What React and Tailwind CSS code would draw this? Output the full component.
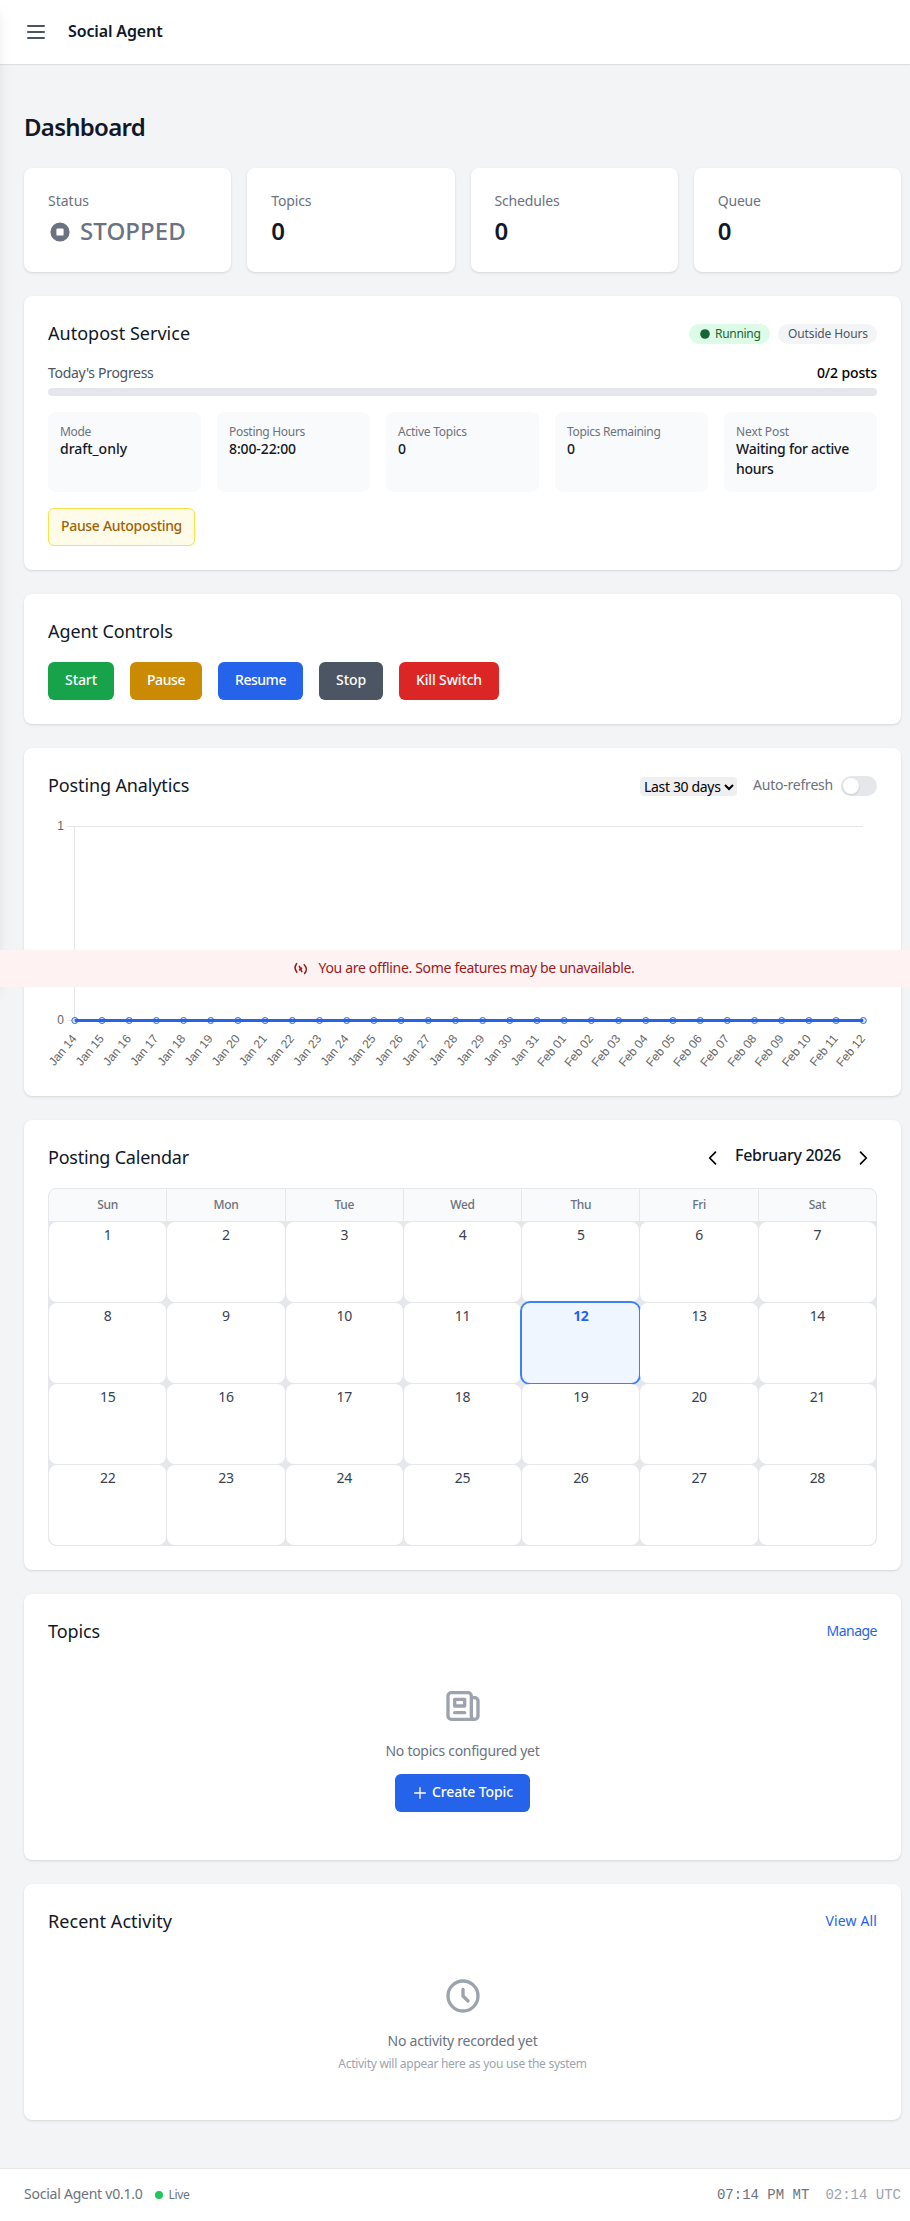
const STATS = [
  { label: "Topics", value: "0", tracking: "tracking-[-0.01em]" },
  { label: "Schedules", value: "0", tracking: "tracking-[-0.0113em]" },
  { label: "Queue", value: "0", tracking: "tracking-[-0.0147em]" },
];

const DETAILS = [
  { label: "Mode", value: "draft_only", lt: "tracking-[-0.0269em]", vt: "tracking-[-0.0019em]" },
  { label: "Posting Hours", value: "8:00-22:00", lt: "tracking-[-0.0249em]", vt: "tracking-[-0.0083em]" },
  { label: "Active Topics", value: "0", lt: "tracking-[-0.0200em]", vt: "tracking-normal" },
  { label: "Topics Remaining", value: "0", lt: "tracking-[-0.0275em]", vt: "tracking-normal" },
  { label: "Next Post", value: "Waiting for active hours", lt: "tracking-[-0.0097em]", vt: "tracking-[-0.018em]" },
];

const CONTROLS = [
  { label: "Start", width: "w-[66px]", color: "bg-[#16a34a]", tracking: "tracking-[-0.0051em]" },
  { label: "Pause", width: "w-[72px]", color: "bg-[#ca8a04]", tracking: "tracking-[-0.0309em]" },
  { label: "Resume", width: "w-[85px]", color: "bg-[#2563eb]", tracking: "tracking-[-0.0329em]" },
  { label: "Stop", width: "w-16", color: "bg-[#4b5563]", tracking: "tracking-[-0.0053em]" },
  { label: "Kill Switch", width: "w-[100px]", color: "bg-[#dc2626]", tracking: "tracking-[-0.0105em]" },
];

const WEEKDAYS = ["Sun", "Mon", "Tue", "Wed", "Thu", "Fri", "Sat"];
const TODAY = 12;

const CHART_LABELS = [
  ...Array.from({ length: 18 }, (_, i) => `Jan ${14 + i}`),
  ...Array.from({ length: 12 }, (_, i) => `Feb ${String(i + 1).padStart(2, "0")}`),
];

function Card({ children, className = "" }) {
  return (
    <section
      className={`rounded-lg bg-white p-6 shadow-[0_1px_3px_0_rgb(0_0_0/0.1),0_1px_2px_-1px_rgb(0_0_0/0.1)] ${className}`}
    >
      {children}
    </section>
  );
}

function CardTitle({ children, className }) {
  return (
    <h2 className={`pb-0.5 text-lg leading-[26px] font-normal whitespace-nowrap text-[#111827] ${className}`}>
      {children}
    </h2>
  );
}

function Header() {
  return (
    <header className="flex h-16 items-center gap-5 bg-white px-6 shadow-[0_1px_2px_0_rgb(0_0_0/0.05),0_1px_0_0_#e5e7eb]">
      <button aria-label="Open menu" className="text-[#4b5563]">
        <svg className="size-6" fill="none" viewBox="0 0 24 24" stroke="currentColor" strokeWidth="2" strokeLinecap="round">
          <path d="M4 6h16M4 12h16M4 18h16" />
        </svg>
      </button>
      <span className="pb-0.5 text-base leading-[22px] font-semibold tracking-[-0.0084em] text-[#111827]">
        Social Agent
      </span>
    </header>
  );
}

function StatusCards() {
  return (
    <div className="grid grid-cols-4 gap-4">
      <Card>
        <p className="pb-0.5 text-sm leading-[18px] text-[#6b7280]">Status</p>
        <p className="mt-1 flex items-center gap-2 text-2xl leading-8 font-medium text-[#6b7280]">
          <svg className="size-6" fill="currentColor" viewBox="0 0 20 20">
            <path
              fillRule="evenodd"
              d="M10 18a8 8 0 100-16 8 8 0 000 16zM8 7a1 1 0 00-1 1v4a1 1 0 001 1h4a1 1 0 001-1V8a1 1 0 00-1-1H8z"
            />
          </svg>
          <span className="pb-0.5 leading-[30px] tracking-[0.0047em]">STOPPED</span>
        </p>
      </Card>
      {STATS.map((s) => (
        <Card key={s.label}>
          <p className={`pb-0.5 text-sm leading-[18px] text-[#6b7280] ${s.tracking}`}>{s.label}</p>
          <p className="mt-1 pb-0.5 text-2xl leading-[30px] font-semibold text-[#111827]">{s.value}</p>
        </Card>
      ))}
    </div>
  );
}

function AutopostCard() {
  return (
    <Card>
      <div className="flex items-center justify-between">
        <CardTitle className="tracking-[0.001em]">Autopost Service</CardTitle>
        <div className="flex gap-2 text-xs leading-4">
          <span className="flex h-5 w-[81px] items-center gap-1 rounded-full bg-[#dcfce7] px-2.5 tracking-[-0.024em] text-[#166534]">
            <svg className="size-3 shrink-0" fill="currentColor" viewBox="0 0 20 20">
              <circle cx="10" cy="10" r="8" />
            </svg>
            Running
          </span>
          <span className="flex h-5 w-[99px] items-center rounded-full bg-[#f3f4f6] px-2.5 tracking-[-0.010em] whitespace-nowrap text-[#4b5563]">
            Outside Hours
          </span>
        </div>
      </div>
      <div className="mt-4 flex justify-between pb-0.5 text-sm leading-[18px]">
        <span className="tracking-[-0.0218em] text-[#4b5563]">Today's Progress</span>
        <span className="font-medium tracking-[-0.0099em] text-black">0/2 posts</span>
      </div>
      <div className="mt-1 h-2 rounded bg-[#e5e7eb]" />
      <div className="mt-4 grid grid-cols-5 gap-4">
        {DETAILS.map((d) => (
          <div key={d.label} className="rounded-lg bg-[#f9fafb] p-3">
            <p className={`text-xs leading-4 whitespace-nowrap text-[#6b7280] ${d.lt}`}>{d.label}</p>
            <p className={`-mt-px mb-px text-sm leading-5 font-medium text-[#111827] ${d.vt}`}>{d.value}</p>
          </div>
        ))}
      </div>
      <button className="mt-4 flex h-[38px] w-[147px] items-center justify-center rounded-md border border-[#fde047] bg-[#fefce8] pb-0.5 text-sm leading-5 font-medium tracking-[-0.0223em] whitespace-nowrap text-[#a16207]">
        Pause Autoposting
      </button>
    </Card>
  );
}

function ControlsCard() {
  return (
    <Card>
      <CardTitle className="tracking-[-0.005em]">Agent Controls</CardTitle>
      <div className="mt-4 flex gap-4">
        {CONTROLS.map((c) => (
          <button
            key={c.label}
            className={`h-[38px] rounded-md pb-0.5 text-sm leading-5 font-medium text-white ${c.width} ${c.color} ${c.tracking}`}
          >
            {c.label}
          </button>
        ))}
      </div>
    </Card>
  );
}

function PostsChart() {
  const first = 26.8;
  const step = (815.3 - first) / (CHART_LABELS.length - 1);
  const baseline = 204.5;
  return (
    <svg
      className="mt-4 block h-64 w-full overflow-visible font-['Liberation_Sans',sans-serif] text-xs"
      viewBox="0 0 829 256"
    >
      <g stroke="#e5e5e5" fill="none">
        <path d="M19 10.5H815M19 204.5H815M26.5 10V204" />
      </g>
      <g fill="#666666" textAnchor="end">
        <text x="16" y="14">1</text>
        <text x="16" y="208">0</text>
      </g>
      <path d={`M${first} ${baseline}H815.3`} stroke="#2563eb" strokeWidth="3" />
      {CHART_LABELS.map((label, i) => {
        const x = first + i * step;
        return (
          <g key={label}>
            <circle cx={x} cy={baseline} r="3" fill="#2563eb" fillOpacity="0.1" stroke="#2563eb" />
            <text transform={`translate(${x + 2.5} 223) rotate(-50)`} textAnchor="end" fill="#666666">
              {label}
            </text>
          </g>
        );
      })}
    </svg>
  );
}

function AnalyticsCard() {
  return (
    <Card>
      <div className="flex h-7 items-center justify-between">
        <CardTitle className="tracking-[-0.007em]">Posting Analytics</CardTitle>
        <div className="flex items-center gap-4 text-sm leading-5">
          <button className="mt-px flex h-[19px] w-[97px] items-center justify-between rounded bg-[#efefef] pr-[3px] pl-1 leading-[19px] tracking-[-0.0241em] whitespace-nowrap text-black">
            <span>Last 30 days</span>
            <svg className="h-2 w-2.5" fill="none" viewBox="0 0 10 8" stroke="currentColor" strokeWidth="2">
              <path d="M1 2l4 4 4-4" />
            </svg>
          </button>
          <div className="flex items-center gap-2">
            <span className="w-20 pb-0.5 leading-[18px] tracking-[-0.0155em] whitespace-nowrap text-[#6b7280]">
              Auto-refresh
            </span>
            <button aria-label="Toggle auto-refresh" className="flex h-5 w-9 items-center rounded-full bg-[#e5e7eb] px-0.5">
              <span className="size-4 rounded-full bg-white shadow" />
            </button>
          </div>
        </div>
      </div>
      <PostsChart />
    </Card>
  );
}

function Chevron({ label, d }) {
  return (
    <button aria-label={label} className="p-1 text-black">
      <svg className="size-5" fill="none" viewBox="0 0 24 24" stroke="currentColor" strokeWidth="2" strokeLinecap="round" strokeLinejoin="round">
        <path d={d} />
      </svg>
    </button>
  );
}

function CalendarCard() {
  return (
    <Card>
      <div className="flex h-7 items-center justify-between">
        <CardTitle className="tracking-[-0.012em]">Posting Calendar</CardTitle>
        <div className="flex items-start gap-2">
          <Chevron label="Previous month" d="M15 19l-7-7 7-7" />
          <span className="w-[106px] text-base leading-[22px] font-medium tracking-[-0.0168em] whitespace-nowrap text-[#111827]">
            February 2026
          </span>
          <Chevron label="Next month" d="M9 5l7 7-7 7" />
        </div>
      </div>
      <div className="mt-4 grid grid-cols-7 gap-px overflow-hidden rounded-lg border border-[#e5e7eb] bg-[#e5e7eb]">
        {WEEKDAYS.map((d) => (
          <div
            key={d}
            className="h-8 bg-[#f9fafb] py-2 text-center text-xs leading-4 font-medium tracking-[-0.03em] text-[#6b7280]"
          >
            {d}
          </div>
        ))}
        {Array.from({ length: 28 }, (_, i) => i + 1).map((day) => (
          <div
            key={day}
            className={`h-20 rounded-lg p-1 text-center text-sm leading-[18px] tracking-[-0.0256em] ${
              day === TODAY
                ? "bg-[#eff6ff] font-bold text-[#2563eb] shadow-[0_0_0_2px_#3b82f6]"
                : "bg-white text-[#374151]"
            }`}
          >
            {day}
          </div>
        ))}
      </div>
    </Card>
  );
}

function EmptyIcon({ d }) {
  return (
    <svg className="size-10 text-[#9ca3af]" fill="none" viewBox="0 0 24 24" stroke="currentColor" strokeWidth="2" strokeLinecap="round" strokeLinejoin="round">
      <path d={d} />
    </svg>
  );
}

function TopicsCard() {
  return (
    <Card>
      <div className="flex items-center justify-between">
        <CardTitle className="tracking-[-0.006em]">Topics</CardTitle>
        <a className="pb-0.5 text-sm leading-[18px] tracking-[-0.0365em] text-[#2563eb]">Manage</a>
      </div>
      <div className="mt-4 flex flex-col items-center py-6">
        <EmptyIcon d="M19 20H5a2 2 0 01-2-2V6a2 2 0 012-2h10a2 2 0 012 2v1m2 13a2 2 0 01-2-2V7m2 13a2 2 0 002-2V9a2 2 0 00-2-2h-2m-4-3H9M7 16h6M7 8h6v4H7V8z" />
        <p className="mt-4 pb-0.5 text-sm leading-[18px] tracking-[-0.0203em] text-[#6b7280]">No topics configured yet</p>
        <button className="mt-3 flex h-[38px] w-[135px] items-center gap-1 rounded-md bg-[#2563eb] px-[17px] text-sm leading-5 font-medium tracking-[-0.0083em] whitespace-nowrap text-white">
          <svg className="size-4 shrink-0" fill="none" viewBox="0 0 24 24" stroke="currentColor" strokeWidth="2" strokeLinecap="round">
            <path d="M12 4v16m8-8H4" />
          </svg>
          <span className="pb-0.5 leading-[18px]">Create Topic</span>
        </button>
      </div>
    </Card>
  );
}

function ActivityCard() {
  return (
    <Card>
      <div className="flex items-center justify-between">
        <CardTitle className="tracking-[0.003em]">Recent Activity</CardTitle>
        <a className="pb-0.5 text-sm leading-[18px] tracking-[0.0094em] text-[#2563eb]">View All</a>
      </div>
      <div className="mt-4 flex flex-col items-center py-6">
        <EmptyIcon d="M12 8v4l3 3m6-3a9 9 0 11-18 0 9 9 0 0118 0z" />
        <p className="mt-4 pb-0.5 text-sm leading-[18px] tracking-[-0.0163em] text-[#6b7280]">No activity recorded yet</p>
        <p className="mt-1 text-xs leading-4 tracking-[-0.023em] text-[#9ca3af]">
          Activity will appear here as you use the system
        </p>
      </div>
    </Card>
  );
}

function Footer() {
  return (
    <footer className="flex h-[53px] items-center justify-between border-t border-[#e5e7eb] bg-white pr-[9px] pl-6 text-sm leading-5 text-[#6b7280]">
      <div className="flex items-center gap-3">
        <span className="pb-0.5 leading-[18px] tracking-[-0.017em]">Social Agent v0.1.0</span>
        <span className="flex items-center gap-1.5 text-xs tracking-[-0.026em]">
          <span className="size-2 rounded-full bg-[#22c55e]" />
          Live
        </span>
      </div>
      <div className="flex gap-4 font-['Liberation_Mono',monospace]">
        <span>07:14 PM MT</span>
        <span className="text-[#9ca3af]">02:14 UTC</span>
      </div>
    </footer>
  );
}

function OfflineBanner() {
  return (
    <div className="absolute top-[950px] left-0 flex h-[37px] w-[925px] items-center justify-center gap-2 bg-[#fef2f2] text-sm leading-5 text-[#991b1b]">
      <svg className="size-5" fill="none" viewBox="0 0 20 20" stroke="currentColor" strokeWidth="1.6" strokeLinecap="round">
        <path d="M5.6 4.6C3.7 7.2 3.8 10.6 5.9 13.2" />
        <path d="M13.2 5.8C15.8 8.4 15.8 12 13.6 14.4" />
        <path d="M8.4 7.4L10.8 12.6M10.6 9.2L8.6 10.8" />
      </svg>
      <span className="w-[316px] pb-0.5 leading-[18px] tracking-[-0.0227em] whitespace-nowrap">
        You are offline. Some features may be unavailable.
      </span>
    </div>
  );
}

export default function App() {
  return (
    <div className="relative min-h-[2221px] w-full overflow-hidden bg-[#f3f4f6] font-['Noto_Sans',sans-serif]">
      <Header />
      <main className="flex flex-col gap-6 pt-12 pr-[9px] pb-12 pl-6">
        <h1 className="pb-0.5 text-2xl leading-[30px] font-semibold tracking-[-0.0305em] text-[#111827]">Dashboard</h1>
        <StatusCards />
        <AutopostCard />
        <ControlsCard />
        <AnalyticsCard />
        <CalendarCard />
        <TopicsCard />
        <ActivityCard />
      </main>
      <Footer />
      <aside className="absolute top-0 -left-64 h-[987px] w-64 bg-white shadow-[0_10px_15px_-3px_rgb(0_0_0/0.1),0_4px_6px_-4px_rgb(0_0_0/0.1)]" />
      <OfflineBanner />
    </div>
  );
}
